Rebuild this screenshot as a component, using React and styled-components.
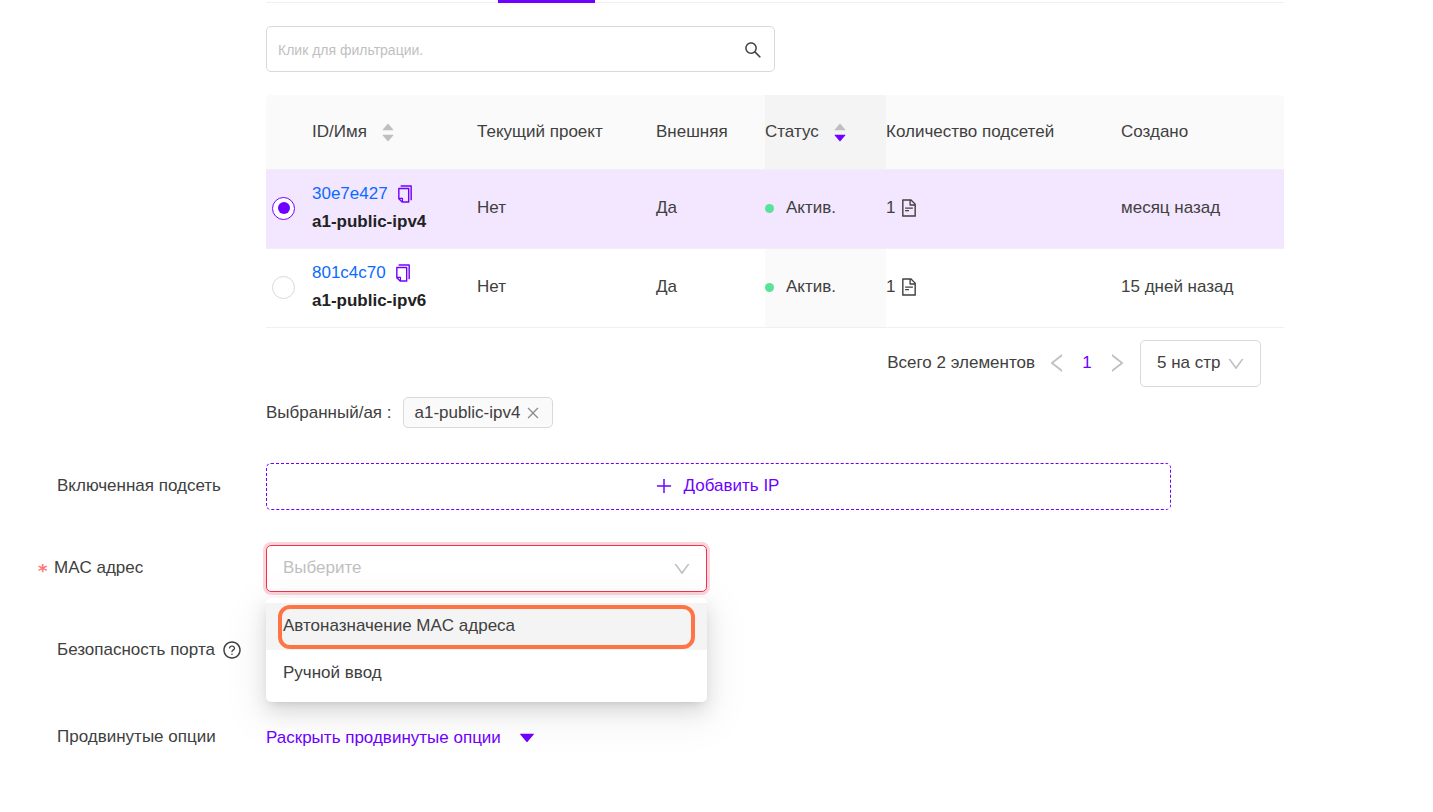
import React, {useState} from 'react'
import styled, {createGlobalStyle} from 'styled-components'
import {
    AiOutlineSearch,
    AiOutlineCopy,
    AiOutlineFileText,
    AiOutlinePlus,
    AiOutlineQuestionCircle,
    AiOutlineClose,
    AiOutlineLeft,
    AiOutlineRight,
    AiOutlineDown,
    AiFillCaretUp,
    AiFillCaretDown
} from 'react-icons/ai'

const purple = '#7000ff'
const grey = '#bfbfbf'
const line = '#d9d9d9'

const GlobalStyle = createGlobalStyle`
    *, *::before, *::after {
        box-sizing: border-box;
    }
    body {
        margin: 0;
        background: #fff;
        color: #404040;
        font-family: "Liberation Sans", Arial, sans-serif;
        font-size: 17px;
        line-height: 28px;
    }
    button, input, select {
        margin: 0;
        font: inherit;
        color: inherit;
    }
    button {
        padding: 0;
        border: 0;
        background: none;
        cursor: pointer;
    }
    svg {
        display: block;
        flex: none;
    }
`

const Form = styled.form`
    display: flex;
    flex-direction: column;
    gap: 35px;
    padding-bottom: 40px;
`

const Row = styled.div`
    display: grid;
    grid-template-columns: 266px minmax(0, 1fr);
    align-items: center;
    min-height: ${props => props.$height || 47}px;
    padding-right: 149px;
`

const Label = styled.label`
    display: flex;
    align-items: center;
    gap: 7px;
    padding-left: ${props => props.$required ? 38 : 57}px;
    padding-bottom: 2px;
`

const Star = styled.span`
    width: 9px;
    padding-top: 6px;
    color: #ff7875;
    font-family: "DejaVu Sans", sans-serif;
    font-size: 18px;
    font-weight: 700;
    line-height: 20px;
`

const Networks = styled.section`
    grid-column: 2;
    display: flex;
    flex-direction: column;
`

const Tabs = styled.nav`
    display: flex;
    height: 3px;
    padding-left: 232px;
    background: linear-gradient(#fff 2px, #f0f0f0 2px);
`

const TabInk = styled.div`
    width: 97px;
    background: ${purple};
`

const Search = styled.div`
    display: flex;
    align-items: center;
    width: 50%;
    height: 46px;
    margin: 23px 0;
    padding: 2px 11px 0;
    border: 1px solid ${line};
    border-radius: 5px;
    input {
        flex: 1;
        min-width: 0;
        padding: 0;
        border: 0;
        outline: 0;
        background: none;
        font-size: 14px;
    }
    input::placeholder {
        color: ${grey};
        opacity: 1;
    }
`

const Table = styled.table`
    width: 100%;
    table-layout: fixed;
    border-collapse: separate;
    border-spacing: 0;
`

const Th = styled.th`
    height: 75px;
    padding: 0;
    border-bottom: 1px solid #f0f0f0;
    background: ${props => props.$sorted ? '#f4f4f4' : '#fafafa'};
    font-weight: 400;
    text-align: left;
    white-space: nowrap;
    &:first-child {
        border-top-left-radius: 5px;
    }
    &:last-child {
        border-top-right-radius: 5px;
    }
`

const Tr = styled.tr`
    td {
        background: ${props => props.$selected ? '#f3e6ff' : 'transparent'};
    }
`

const Td = styled.td`
    height: 79px;
    padding: 0 0 2px;
    border-bottom: 1px solid #f0f0f0;
    && {
        ${props => props.$sorted && !props.$selected ? 'background: #fafafa;' : ''}
    }
`

const Inline = styled.div`
    display: flex;
    align-items: center;
    gap: ${props => props.$gap || 6}px;
`

const SortButton = styled.button`
    display: flex;
    align-items: center;
    gap: 13px;
`

const Sorter = styled.span`
    display: flex;
    flex-direction: column;
    svg {
        color: ${grey};
    }
    svg + svg {
        margin-top: -5px;
        color: ${props => props.$down ? purple : grey};
    }
`

const Radio = styled.input`
    appearance: none;
    display: grid;
    place-content: center;
    width: 23px;
    height: 23px;
    margin: 0 0 0 6px;
    border: 1px solid ${line};
    border-radius: 50%;
    background: #fff;
    &:checked {
        border-color: ${purple};
    }
    &:checked::before {
        content: '';
        width: 12px;
        height: 12px;
        border-radius: 50%;
        background: ${purple};
    }
`

const IdLink = styled.a`
    color: #0a6cff;
    text-decoration: none;
`

const CopyButton = styled.button`
    color: ${purple};
`

const Name = styled.div`
    color: #222;
    font-weight: 700;
`

const Dot = styled.span`
    width: 9px;
    height: 9px;
    border-radius: 50%;
    background: #57e39a;
`

const Pagination = styled.div`
    display: flex;
    align-items: center;
    justify-content: flex-end;
    gap: 6px;
    height: 47px;
    margin-top: 12px;
    padding-right: 23px;
`

const Total = styled.span`
    margin-right: 4px;
    padding-bottom: 2px;
`

const PageButton = styled.button`
    display: flex;
    align-items: center;
    justify-content: center;
    width: 24px;
    height: 30px;
    padding-bottom: 2px;
    color: ${props => props.$active ? purple : grey};
`

const PageSize = styled.div`
    margin-left: 5px;
`

const SelectBox = styled.div`
    position: relative;
    display: flex;
    align-items: center;
    width: ${props => props.$width}px;
    max-width: 100%;
    height: 47px;
    select {
        appearance: none;
        width: 100%;
        height: 100%;
        padding: 0 34px 2px 16px;
        border: 1px solid ${props => props.$error ? '#f5304f' : line};
        border-radius: 5px;
        outline: 0;
        background: #fff;
        color: ${props => props.$error ? grey : 'inherit'};
        box-shadow: ${props => props.$error ? '0 0 0 3px rgba(245, 48, 79, 0.2)' : 'none'};
    }
    > svg {
        position: absolute;
        right: 15px;
        color: ${grey};
        pointer-events: none;
    }
`

const Chosen = styled.div`
    display: flex;
    align-items: center;
    gap: 11px;
    margin-top: 10px;
`

const Tag = styled.span`
    display: flex;
    align-items: center;
    gap: 5px;
    height: 31px;
    padding: 0 11px;
    border: 1px solid ${line};
    border-radius: 5px;
    background: #fafafa;
    button {
        color: #8c8c8c;
    }
`

const AddButton = styled.button`
    display: flex;
    align-items: center;
    justify-content: center;
    gap: 10px;
    height: 47px;
    margin-right: 113px;
    padding: 0 4px 2px 0;
    border: 1px dashed ${purple};
    border-radius: 5px;
    color: ${purple};
`

const Dropdown = styled.ul`
    position: absolute;
    top: 53px;
    left: 0;
    z-index: 1;
    width: 100%;
    margin: 0;
    padding: 5px 0;
    border-radius: 5px;
    background: #fff;
    list-style: none;
    box-shadow: 0 4px 8px -5px rgba(0, 0, 0, 0.16), 0 8px 20px rgba(0, 0, 0, 0.12), 0 12px 40px 10px rgba(0, 0, 0, 0.05);
`

const Option = styled.li`
    position: relative;
    display: flex;
    align-items: center;
    height: 47px;
    padding: 0 17px 2px;
    background: ${props => props.$active ? '#f4f4f4' : '#fff'};
`

const Marker = styled.span`
    position: absolute;
    inset: 2px 12px 1px;
    border: 4px solid #ff7444;
    border-radius: 12px;
`

const MoreButton = styled.button`
    display: flex;
    align-items: center;
    gap: 16px;
    color: ${purple};
`

const columns = [
    {title: '', width: 46},
    {title: 'ID/Имя', width: 165, sort: 'none'},
    {title: 'Текущий проект', width: 179},
    {title: 'Внешняя', width: 109},
    {title: 'Статус', width: 121, sort: 'down'},
    {title: 'Количество подсетей', width: 235},
    {title: 'Создано', width: 163}
]

const networks = [
    {id: '30e7e427', name: 'a1-public-ipv4', current: 'Нет', external: 'Да', status: 'Актив.', subnets: 1, created: 'месяц назад'},
    {id: '801c4c70', name: 'a1-public-ipv6', current: 'Нет', external: 'Да', status: 'Актив.', subnets: 1, created: '15 дней назад'}
]

const NetworkRow = ({network, selected, onSelect}) => (
    <Tr $selected={selected}>
        <Td>
            <Radio type="radio" name="network" aria-label={network.name} checked={selected} onChange={() => onSelect(network.name)}/>
        </Td>
        <Td>
            <Inline $gap={7}>
                <IdLink href={`#${network.id}`}>{network.id}</IdLink>
                <CopyButton type="button" aria-label="Копировать"><AiOutlineCopy size={20}/></CopyButton>
            </Inline>
            <Name>{network.name}</Name>
        </Td>
        <Td>{network.current}</Td>
        <Td>{network.external}</Td>
        <Td $sorted $selected={selected}>
            <Inline $gap={12}><Dot/>{network.status}</Inline>
        </Td>
        <Td>
            <Inline $gap={4}>{network.subnets}<AiOutlineFileText size={20}/></Inline>
        </Td>
        <Td>{network.created}</Td>
    </Tr>
)

const App = () => {
    let [selected, updateSelected] = useState('a1-public-ipv4')
    let [mac, updateMac] = useState('')
    return (
        <>
            <GlobalStyle/>
            <Form onSubmit={(e) => e.preventDefault()}>
                <Row>
                    <Networks>
                        <Tabs><TabInk/></Tabs>
                        <Search>
                            <input type="text" aria-label="Фильтр" placeholder="Клик для фильтрации."/>
                            <AiOutlineSearch size={20}/>
                        </Search>
                        <Table>
                            <colgroup>
                                {columns.map((c) => <col key={c.title} style={{width: c.width}}/>)}
                            </colgroup>
                            <thead>
                                <tr>
                                    {columns.map((c) => (
                                        <Th key={c.title} $sorted={c.sort === 'down'}>
                                            {c.sort ? (
                                                <SortButton type="button">
                                                    {c.title}
                                                    <Sorter $down={c.sort === 'down'}>
                                                        <AiFillCaretUp size={16}/>
                                                        <AiFillCaretDown size={16}/>
                                                    </Sorter>
                                                </SortButton>
                                            ) : c.title}
                                        </Th>
                                    ))}
                                </tr>
                            </thead>
                            <tbody>
                                {networks.map((n) => (
                                    <NetworkRow key={n.id} network={n} selected={n.name === selected} onSelect={updateSelected}/>
                                ))}
                            </tbody>
                        </Table>
                        <Pagination>
                            <Total>Всего 2 элементов</Total>
                            <PageButton type="button" aria-label="Назад"><AiOutlineLeft size={24}/></PageButton>
                            <PageButton type="button" $active>1</PageButton>
                            <PageButton type="button" aria-label="Вперёд"><AiOutlineRight size={24}/></PageButton>
                            <PageSize>
                                <SelectBox $width={121}>
                                    <select aria-label="Элементов на странице" defaultValue="5">
                                        <option value="5">5 на стр</option>
                                        <option value="10">10 на стр</option>
                                    </select>
                                    <AiOutlineDown size={20}/>
                                </SelectBox>
                            </PageSize>
                        </Pagination>
                        <Chosen>
                            <span>Выбранный/ая :</span>
                            <Tag>
                                {selected}
                                <button type="button" aria-label="Убрать"><AiOutlineClose size={16}/></button>
                            </Tag>
                        </Chosen>
                    </Networks>
                </Row>
                <Row>
                    <Label htmlFor="add-ip">Включенная подсеть</Label>
                    <AddButton id="add-ip" type="button"><AiOutlinePlus size={20}/>Добавить IP</AddButton>
                </Row>
                <Row>
                    <Label htmlFor="mac" $required><Star>*</Star>MAC адрес</Label>
                    <SelectBox $width={441} $error>
                        <select id="mac" value={mac} onChange={(e) => updateMac(e.target.value)}>
                            <option value="">Выберите</option>
                            <option value="auto">Автоназначение MAC адреса</option>
                            <option value="manual">Ручной ввод</option>
                        </select>
                        <AiOutlineDown size={20}/>
                        <Dropdown role="listbox">
                            <Option role="option" $active onClick={() => updateMac('auto')}>
                                Автоназначение MAC адреса
                                <Marker/>
                            </Option>
                            <Option role="option" onClick={() => updateMac('manual')}>Ручной ввод</Option>
                        </Dropdown>
                    </SelectBox>
                </Row>
                <Row>
                    <Label as="div">Безопасность порта <AiOutlineQuestionCircle size={20}/></Label>
                </Row>
                <Row $height={58}>
                    <Label htmlFor="advanced">Продвинутые опции</Label>
                    <MoreButton id="advanced" type="button">Раскрыть продвинутые опции <AiFillCaretDown size={20}/></MoreButton>
                </Row>
            </Form>
        </>
    )
}

export default App
